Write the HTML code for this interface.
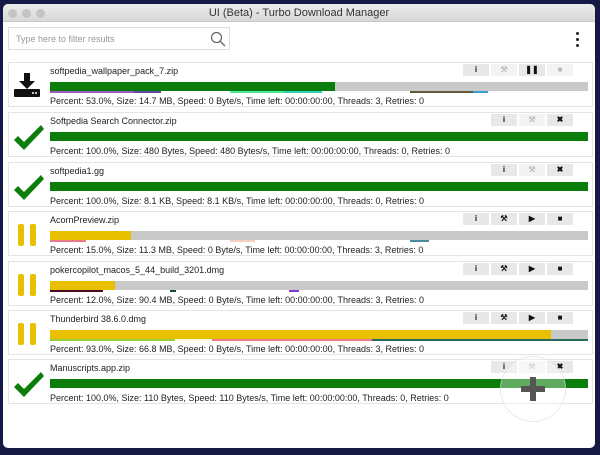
<!DOCTYPE html>
<html><head><style>
*{margin:0;padding:0;box-sizing:border-box}
body{width:600px;height:455px;background:#141a44;font-family:"Liberation Sans",sans-serif;position:relative;overflow:hidden}
.win{position:absolute;left:3px;top:4px;width:592px;height:444px;background:#fff;border-radius:5px;overflow:hidden}
.tb{height:18px;background:linear-gradient(#ececec,#d8d8d8);border-bottom:1px solid #c8c8c8;text-align:center;font-size:11px;line-height:19px;color:#333}
.dot{position:absolute;top:5px;width:9px;height:9px;border-radius:50%;background:#c4c4c4}
.search{position:absolute;left:5px;top:23px;width:222px;height:23px;border:1px solid #ddd;font-size:9px;color:#999;padding:6px 0 0 7px}
.menu{position:absolute;left:573px;top:28px;width:4px}
.menu i{display:block;width:3px;height:3px;background:#222;border-radius:50%;margin-bottom:3px}
.row{position:absolute;left:5px;width:585px;height:45px;border:1px solid #e4e4e4}
.name{position:absolute;left:41px;top:3px;font-size:9px;color:#222}
.stat{position:absolute;left:41px;top:33px;font-size:9px;color:#222}
.bar{position:absolute;left:41px;top:19px;width:538px;height:9px;background:#c9c9c9}
.bar b{position:absolute;top:0;height:9px}
.bar s{position:absolute;top:9px;height:2px}
.btn{position:absolute;top:1px;width:26px;height:12px;background:#e8e8e8;font-size:8px;text-align:center;line-height:12px;color:#111;font-weight:bold}
.ic{position:absolute;left:4px;top:8px}
</style></head><body>
<div class="win">
<div class="tb">UI (Beta) - Turbo Download Manager</div>
<div class="dot" style="left:5px"></div><div class="dot" style="left:19px"></div><div class="dot" style="left:33px"></div>
<div class="search">Type here to filter results
<svg style="position:absolute;right:3px;top:3px" width="16" height="16" viewBox="0 0 16 16"><circle cx="6.5" cy="6.5" r="5" fill="none" stroke="#666" stroke-width="1.2"/><line x1="10" y1="10" x2="15" y2="15" stroke="#666" stroke-width="1.3"/></svg></div>
<div class="menu"><i></i><i></i><i></i></div>

<div class="row" style="top:58px">
<svg class="ic" style="left:5px;top:10px" width="26" height="24" viewBox="0 0 26 24"><path d="M10 0h6v8h5l-8 8-8-8h5z" fill="#111"/><rect x="0" y="16" width="26" height="8" rx="1" fill="#111"/><circle cx="19" cy="20" r="1" fill="#fff"/><circle cx="22" cy="20" r="1" fill="#fff"/></svg>
<div class="name">softpedia_wallpaper_pack_7.zip</div>
<div class="btn" style="left:454px">i</div><div class="btn" style="left:482px;background:#f3f3f3;color:#bbb">⚒</div><div class="btn" style="left:510px">❚❚</div><div class="btn" style="left:538px;background:#f3f3f3;color:#bbb">■</div>
<div class="bar"><b style="left:0;width:285px;background:#0a7d0a"></b><s style="left:0;width:84px;background:#9b59c6"></s><s style="left:84px;width:27px;background:#5b4aa8"></s><s style="left:180px;width:54px;background:#4ee89a"></s><s style="left:234px;width:38px;background:#2ecfb0"></s><s style="left:360px;width:63px;background:#5e5a3a"></s><s style="left:423px;width:15px;background:#3a9ed6"></s></div>
<div class="stat">Percent: 53.0%, Size: 14.7 MB, Speed: 0 Byte/s, Time left: 00:00:00:00, Threads: 3, Retries: 0</div>
</div>

<div class="row" style="top:108px">
<svg class="ic" style="top:12px" width="32" height="26" viewBox="0 0 32 26"><path d="M1 15l4-4 6 6L28 0l3 4-20 21z" fill="#0a7d0a"/></svg>
<div class="name">Softpedia Search Connector.zip</div>
<div class="btn" style="left:482px">i</div><div class="btn" style="left:510px;background:#f3f3f3;color:#bbb">⚒</div><div class="btn" style="left:538px">✖</div>
<div class="bar"><b style="left:0;width:538px;background:#0a7d0a"></b></div>
<div class="stat">Percent: 100.0%, Size: 480 Bytes, Speed: 480 Bytes/s, Time left: 00:00:00:00, Threads: 0, Retries: 0</div>
</div>

<div class="row" style="top:158px">
<svg class="ic" style="top:12px" width="32" height="26" viewBox="0 0 32 26"><path d="M1 15l4-4 6 6L28 0l3 4-20 21z" fill="#0a7d0a"/></svg>
<div class="name">softpedia1.gg</div>
<div class="btn" style="left:482px">i</div><div class="btn" style="left:510px;background:#f3f3f3;color:#bbb">⚒</div><div class="btn" style="left:538px">✖</div>
<div class="bar"><b style="left:0;width:538px;background:#0a7d0a"></b></div>
<div class="stat">Percent: 100.0%, Size: 8.1 KB, Speed: 8.1 KB/s, Time left: 00:00:00:00, Threads: 0, Retries: 0</div>
</div>

<div class="row" style="top:207px">
<svg class="ic" style="left:9px;top:12px" width="20" height="22"><rect x="0" y="0" width="6" height="22" rx="2" fill="#e8c000"/><rect x="12" y="0" width="6" height="22" rx="2" fill="#e8c000"/></svg>
<div class="name">AcornPreview.zip</div>
<div class="btn" style="left:454px">i</div><div class="btn" style="left:482px">⚒</div><div class="btn" style="left:510px">▶</div><div class="btn" style="left:538px">■</div>
<div class="bar"><b style="left:0;width:81px;background:#e8c000"></b><s style="left:0;width:36px;background:#e87a8a"></s><s style="left:180px;width:25px;background:#f5d0c0"></s><s style="left:360px;width:19px;background:#4a8aa0"></s></div>
<div class="stat">Percent: 15.0%, Size: 11.3 MB, Speed: 0 Byte/s, Time left: 00:00:00:00, Threads: 3, Retries: 0</div>
</div>

<div class="row" style="top:257px">
<svg class="ic" style="left:9px;top:12px" width="20" height="22"><rect x="0" y="0" width="6" height="22" rx="2" fill="#e8c000"/><rect x="12" y="0" width="6" height="22" rx="2" fill="#e8c000"/></svg>
<div class="name">pokercopilot_macos_5_44_build_3201.dmg</div>
<div class="btn" style="left:454px">i</div><div class="btn" style="left:482px">⚒</div><div class="btn" style="left:510px">▶</div><div class="btn" style="left:538px">■</div>
<div class="bar"><b style="left:0;width:65px;background:#e8c000"></b><s style="left:0;width:53px;background:#4a0a20"></s><s style="left:120px;width:6px;background:#1a4a3a"></s><s style="left:239px;width:10px;background:#7a3ad0"></s></div>
<div class="stat">Percent: 12.0%, Size: 90.4 MB, Speed: 0 Byte/s, Time left: 00:00:00:00, Threads: 3, Retries: 0</div>
</div>

<div class="row" style="top:306px">
<svg class="ic" style="left:9px;top:12px" width="20" height="22"><rect x="0" y="0" width="6" height="22" rx="2" fill="#e8c000"/><rect x="12" y="0" width="6" height="22" rx="2" fill="#e8c000"/></svg>
<div class="name">Thunderbird 38.6.0.dmg</div>
<div class="btn" style="left:454px">i</div><div class="btn" style="left:482px">⚒</div><div class="btn" style="left:510px">▶</div><div class="btn" style="left:538px">■</div>
<div class="bar"><b style="left:0;width:501px;background:#e8c000"></b><s style="left:0;width:125px;background:#9acd32"></s><s style="left:125px;width:37px;background:#fff8e0"></s><s style="left:162px;width:160px;background:#e87a8a"></s><s style="left:322px;width:216px;background:#2a6a5a"></s></div>
<div class="stat">Percent: 93.0%, Size: 66.8 MB, Speed: 0 Byte/s, Time left: 00:00:00:00, Threads: 3, Retries: 0</div>
</div>

<div class="row" style="top:355px">
<svg class="ic" style="top:12px" width="32" height="26" viewBox="0 0 32 26"><path d="M1 15l4-4 6 6L28 0l3 4-20 21z" fill="#0a7d0a"/></svg>
<div class="name">Manuscripts.app.zip</div>
<div class="btn" style="left:482px">i</div><div class="btn" style="left:510px;background:#f3f3f3;color:#bbb">⚒</div><div class="btn" style="left:538px">✖</div>
<div class="bar"><b style="left:0;width:538px;background:#0a7d0a"></b></div>
<div class="stat">Percent: 100.0%, Size: 110 Bytes, Speed: 110 Bytes/s, Time left: 00:00:00:00, Threads: 0, Retries: 0</div>
</div>
<div style="position:absolute;left:497px;top:352px;width:66px;height:66px;border-radius:50%;background:rgba(255,255,255,0.35);border:1px solid rgba(220,220,220,0.6)"></div>
<div style="position:absolute;left:527px;top:373px;width:6px;height:24px;background:#555"></div>
<div style="position:absolute;left:518px;top:382px;width:24px;height:6px;background:#555"></div>
</div>
</body></html>
